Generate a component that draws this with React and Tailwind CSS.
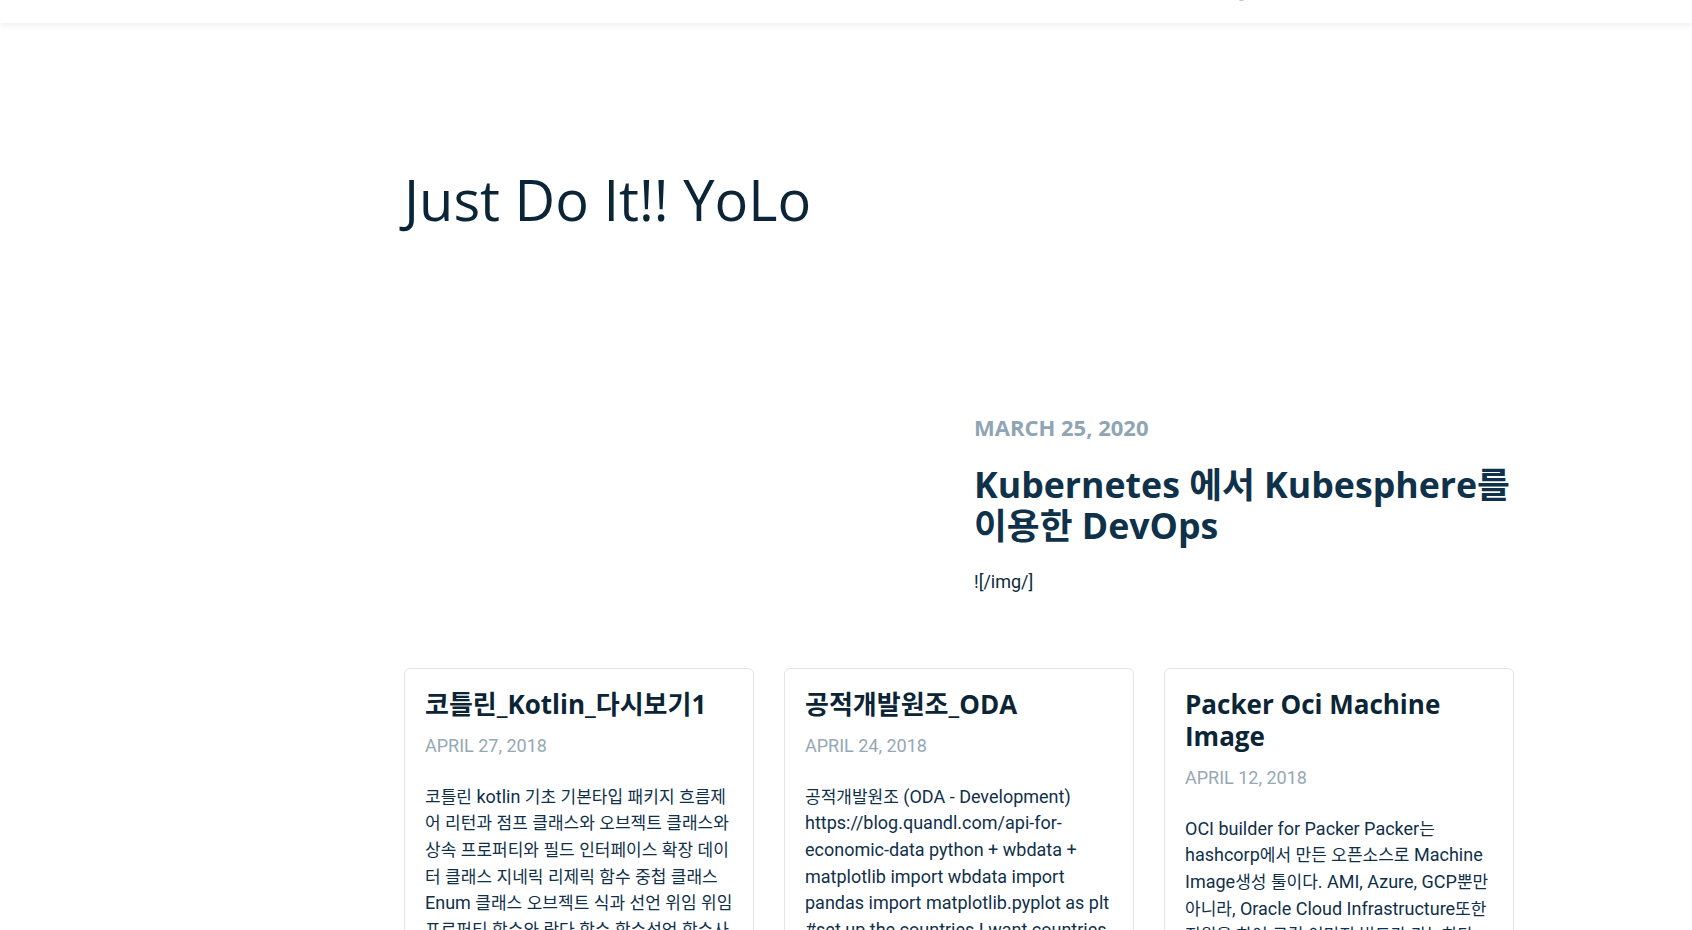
import React from 'react';

const sans = "font-['Open_Sans','Noto_Sans_CJK_KR',sans-serif]";
const body = "font-['Roboto','Noto_Sans_CJK_KR',sans-serif]";

// Hangul runs sit a touch smaller so lines keep the reference's widths
function mixed(text) {
  return text.split(/([\uAC00-\uD7A3]+)/).map((seg, i) =>
    /[\uAC00-\uD7A3]/.test(seg) ? (
      <span key={i} className="text-[17px]">{seg}</span>
    ) : (
      seg
    )
  );
}

const posts = [
  {
    title: '코틀린_Kotlin_다시보기1',
    date: 'APRIL 27, 2018',
    lines: [
      '코틀린 kotlin 기초 기본타입 패키지 흐름제',
      '어 리턴과 점프 클래스와 오브젝트 클래스와',
      '상속 프로퍼티와 필드 인터페이스 확장 데이',
      '터 클래스 지네릭 리제릭 함수 중첩 클래스',
      'Enum 클래스 오브젝트 식과 선언 위임 위임',
      '프로퍼티 함수와 람다 함수 함수선언 함수사',
    ],
  },
  {
    title: '공적개발원조_ODA',
    date: 'APRIL 24, 2018',
    lines: [
      '공적개발원조 (ODA - Development)',
      'https://blog.quandl.com/api-for-',
      'economic-data python + wbdata +',
      'matplotlib import wbdata import',
      'pandas import matplotlib.pyplot as plt',
      '#set up the countries I want countries',
    ],
  },
  {
    title: 'Packer Oci Machine Image',
    date: 'APRIL 12, 2018',
    lines: [
      'OCI builder for Packer Packer는',
      'hashcorp에서 만든 오픈소스로 Machine',
      'Image생성 툴이다. AMI, Azure, GCP뿐만',
      '아니라, Oracle Cloud Infrastructure또한',
      '지원을 하여 로컬 이미지 빌드가 가능하다',
    ],
  },
];

function PostCard({ post }) {
  return (
    <div className="border border-[#e4e4e4] rounded-md px-5 pt-[19px] pb-6 bg-white">
      <h3 className={`${sans} text-[26px] leading-[32px] font-bold text-[#0b2536]`}>{post.title}</h3>
      <div className={`${body} mt-[13px] text-[18px] leading-[25.5px] text-[#95a8b5]`}>{post.date}</div>
      <div className={`${body} mt-[25px] text-[18px] leading-[26.7px] text-[#10304a]`}>
        {post.lines.map((l, i) => (
          <div key={i} className="whitespace-nowrap">{mixed(l)}</div>
        ))}
      </div>
    </div>
  );
}

function App() {
  return (
    <div className="min-h-screen bg-white overflow-hidden">
      {/* Top nav (mostly scrolled out of view) */}
      <header className="fixed top-0 inset-x-0 h-[23px] bg-white shadow-[0_2px_6px_rgba(0,0,0,0.07)] z-10 overflow-hidden">
        <div className={`${body} w-[1110px] ml-[404px] flex justify-between mt-[-14px] text-[15px] leading-[15px] text-[#c4c4c4]`}>
          <span>Just Do It!! YoLo</span>
          <span className="mr-[268px]">Blog</span>
        </div>
      </header>

      <main className="w-[1110px] ml-[404px] pt-[166px] pb-10">
        <h1 className={`${sans} text-[56px] leading-[67px] font-normal text-[#0b2537]`}>Just Do It!! YoLo</h1>

        {/* Featured post */}
        <section className="grid grid-cols-2 gap-[30px] mt-[178px]">
          <div />
          <div>
            <div className={`${sans} text-[22px] leading-[33px] font-bold text-[#8fa5b4]`}>MARCH 25, 2020</div>
            <h2 className={`${sans} mt-[20px] text-[35.7px] leading-[41px] font-bold text-[#0f324a]`}>
              <span className="whitespace-nowrap">Kubernetes 에서 Kubesphere를</span>
              <br />
              이용한 DevOps
            </h2>
            <p className={`${body} mt-[22px] text-[18px] leading-[27px] text-[#0d2a3d]`}>![/img/]</p>
          </div>
        </section>

        {/* Recent posts */}
        <section className="grid grid-cols-3 gap-[30px] mt-[73px] items-start">
          {posts.map((p) => (
            <PostCard key={p.title} post={p} />
          ))}
        </section>
      </main>
    </div>
  );
}

export default App;
